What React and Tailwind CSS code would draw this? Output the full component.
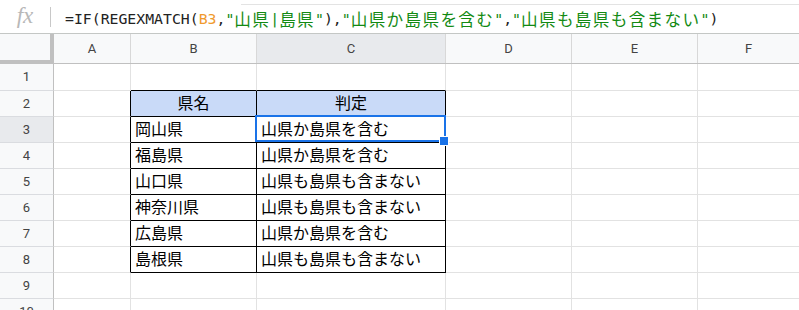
import React from "react";

const COLS = ["A", "B", "C", "D", "E", "F"];
const COL_W = ["w-[77px]", "w-[126px]", "w-[189px]", "w-[126px]", "w-[126px]", "flex-1"];

const DATA = {
  2: ["", "県名", "判定"],
  3: ["", "岡山県", "山県か島県を含む"],
  4: ["", "福島県", "山県か島県を含む"],
  5: ["", "山口県", "山県も島県も含まない"],
  6: ["", "神奈川県", "山県も島県も含まない"],
  7: ["", "広島県", "山県か島県を含む"],
  8: ["", "島根県", "山県も島県も含まない"],
};

const mono = "font-['DejaVu_Sans_Mono',monospace] text-[14.8px]";
const cjk = "font-['Noto_Sans_CJK_JP',sans-serif] text-[16.6px] tracking-[1.35px]";

function A({ children, c = "text-[#222]" }) {
  return <span className={`${mono} ${c}`}>{children}</span>;
}
function J({ children, c = "text-[#138a13]" }) {
  return <span className={`${cjk} ${c}`}>{children}</span>;
}

function FormulaBar() {
  const g = "text-[#138a13]";
  return (
    <div className="h-[34px] flex items-stretch border-b border-[#c4c7c5]">
      <div className="w-[50px] flex items-center justify-center">
        <span className="font-['Liberation_Serif',serif] italic text-[23px] text-[#b8b8b8] leading-none -mt-[2px]">
          fx
        </span>
      </div>
      <div className="flex items-center">
        <div className="w-px h-[20px] bg-[#c8c8c8]" />
      </div>
      <div className="flex-1 flex flex-col">
        <div className="h-[5px] flex">
          <div className="w-[190px]" />
          <div className="flex-1 border-b border-[#e3e3e3]" />
        </div>
        <div className="flex-1 flex items-center pl-[14px] whitespace-nowrap leading-none">
          <A>=IF(REGEXMATCH(</A>
          <A c="text-[#f09a2e]">B3</A>
          <A>,</A>
          <A c={g}>"</A>
          <J>山県</J>
          <A c={g}>|</A>
          <J>島県</J>
          <A c={g}>"</A>
          <A>),</A>
          <A c={g}>"</A>
          <J>山県か島県を含む</J>
          <A c={g}>"</A>
          <A>,</A>
          <A c={g}>"</A>
          <J>山県も島県も含まない</J>
          <A c={g}>"</A>
          <A>)</A>
        </div>
      </div>
    </div>
  );
}

function HeaderRow() {
  return (
    <div className="flex h-[30px] border-b border-[#c0c0c0]">
      <div className="w-[54px] h-[30px] bg-[#f8f9fa] border-r-4 border-b-4 border-[#c0c0c0]" />
      {COLS.map((c, i) => (
        <div
          key={c}
          className={`${COL_W[i]} ${i < 5 ? "border-r border-[#d8d8d8]" : ""} ${
            c === "C" ? "bg-[#e8eaed]" : "bg-[#f8f9fa]"
          } flex items-center justify-center font-['Roboto',sans-serif] text-[13px] text-[#444]`}
        >
          {c}
        </div>
      ))}
    </div>
  );
}

function Row({ n }) {
  const h = n === 1 ? "h-[27px]" : "h-[26px]";
  const data = DATA[n] || ["", "", ""];
  const inTable = n >= 2 && n <= 8;
  return (
    <div className={`flex ${h}`}>
      <div
        className={`w-[54px] border-r border-b border-r-[#c0c0c0] border-b-[#dadce0] ${
          n === 3 ? "bg-[#e8eaed]" : "bg-[#f8f9fa]"
        } flex items-center justify-center font-['Roboto',sans-serif] text-[13px] text-[#444]`}
      >
        {n}
      </div>
      {COLS.map((c, i) => {
        const rightBlack = inTable && i <= 2;
        const bottomBlack = (i === 1 || i === 2) && n >= 1 && n <= 8;
        const header = n === 2 && (i === 1 || i === 2);
        const text = i <= 2 ? data[i] : "";
        return (
          <div
            key={c}
            className={`${COL_W[i]} border-b ${i < 5 ? "border-r" : ""} ${
              rightBlack ? "border-r-black" : "border-r-[#e2e2e2]"
            } ${bottomBlack ? "border-b-black" : "border-b-[#e2e2e2]"} ${
              header ? "bg-[#c9daf8] justify-center" : "bg-white pl-[4px]"
            } flex items-center font-['Liberation_Sans','Noto_Sans_CJK_JP',sans-serif] text-[16px] text-black whitespace-nowrap overflow-hidden leading-none`}
          >
            {text}
          </div>
        );
      })}
    </div>
  );
}

export default function App() {
  return (
    <div className="relative w-[799px] h-[310px] overflow-hidden bg-white">
      <FormulaBar />
      <HeaderRow />
      {[1, 2, 3, 4, 5, 6, 7, 8, 9, 10].map((n) => (
        <Row key={n} n={n} />
      ))}
      <div className="absolute left-[255px] top-[115px] w-[191px] h-[27px] border-2 border-[#1a73e8]" />
      <div className="absolute left-[439px] top-[136px] w-[10px] h-[10px] bg-[#1a73e8] border border-white" />
    </div>
  );
}
